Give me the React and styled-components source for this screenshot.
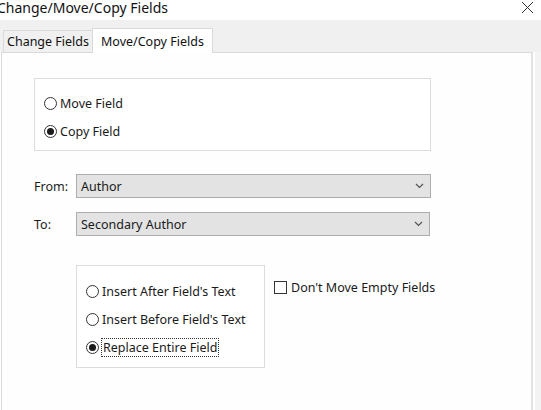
import React from 'react';
import styled, { createGlobalStyle } from 'styled-components';

const GlobalStyle = createGlobalStyle`
  html, body {
    margin: 0;
    padding: 0;
    background: #ffffff;
  }
  body {
    font-family: "Noto Sans", "Open Sans", sans-serif;
    color: #1a1a1a;
  }
`;

const Window = styled.div`
  width: 541px;
  height: 410px;
  overflow: hidden;
  display: flex;
  flex-direction: column;
  background: #ffffff;
`;

const TitleBar = styled.div`
  height: 20px;
  display: flex;
  align-items: center;
  justify-content: space-between;
  padding-right: 7px;
`;

const Title = styled.span`
  font-size: 14px;
  margin-left: -3px;
  margin-top: -6px;
  color: #111;
`;

const CloseIcon = styled.svg`
  width: 13px;
  height: 13px;
  margin-top: -6px;
`;

const TabStrip = styled.div`
  height: 32px;
  background: #f0f0f0;
  display: flex;
  align-items: flex-end;
  padding-left: 3px;
`;

const Tab = styled.div`
  box-sizing: border-box;
  height: ${(p) => (p.$active ? '25px' : '22px')};
  padding: 0 ${(p) => (p.$active ? '8px' : '3px')};
  display: flex;
  align-items: center;
  font-size: 12.5px;
  background: ${(p) => (p.$active ? '#ffffff' : '#f0f0f0')};
  border: 1px solid #dadada;
  border-bottom: none;
  border-right: ${(p) => (p.$active ? '1px solid #dadada' : 'none')};
  margin-bottom: ${(p) => (p.$active ? '-1px' : '0')};
  position: relative;
  z-index: ${(p) => (p.$active ? 1 : 0)};
  color: #111;
`;

const Body = styled.div`
  flex: 1;
  display: flex;
  padding-left: 1px;
`;

const Panel = styled.div`
  box-sizing: border-box;
  width: 532px;
  border: 1px solid #dadada;
  border-bottom: none;
  border-right: 2px solid #e2e2e2;
  background: #fefefe;
  padding: 25px 0 0 32px;
  display: flex;
  flex-direction: column;
`;

const GroupBox = styled.div`
  box-sizing: border-box;
  width: ${(p) => p.$w}px;
  height: ${(p) => p.$h}px;
  border: 1px solid #dcdcdc;
  background: #ffffff;
  padding: ${(p) => p.$pad};
  display: flex;
  flex-direction: column;
  gap: ${(p) => p.$gap}px;
`;

const OptionRow = styled.label`
  display: flex;
  align-items: center;
  height: 20px;
  font-size: 12.5px;
  gap: 3px;
`;

const Radio = styled.span`
  box-sizing: border-box;
  width: 13px;
  height: 13px;
  border-radius: 50%;
  border: 1px solid #333;
  background: #fff;
  display: flex;
  align-items: center;
  justify-content: center;
  flex-shrink: 0;
  &::after {
    content: '';
    width: 7px;
    height: 7px;
    border-radius: 50%;
    background: ${(p) => (p.$checked ? '#1a1a1a' : 'transparent')};
  }
`;

const Check = styled.span`
  box-sizing: border-box;
  width: 13px;
  height: 13px;
  border: 1px solid #333;
  background: #fff;
  flex-shrink: 0;
`;

const FocusText = styled.span`
  outline: 1px dotted #333;
  outline-offset: 0;
  padding: 0 1px;
  line-height: 17px;
`;

const FieldRow = styled.div`
  display: flex;
  align-items: center;
  margin-top: ${(p) => p.$mt}px;
`;

const FieldLabel = styled.span`
  width: 42px;
  font-size: 12.5px;
`;

const Select = styled.div`
  box-sizing: border-box;
  width: ${(p) => p.$w}px;
  height: 24px;
  background: #e3e3e3;
  border: 1px solid #adadad;
  display: flex;
  align-items: center;
  justify-content: space-between;
  padding: 0 6px 0 4px;
  font-size: 12.5px;
`;

const Chevron = styled.svg`
  width: 9px;
  height: 6px;
`;

const BottomRow = styled.div`
  display: flex;
  align-items: flex-start;
  margin-top: 29px;
  margin-left: 42px;
  gap: 9px;
`;

const CheckRow = styled(OptionRow)`
  margin-top: 12px;
  gap: 4px;
`;

const RightStrip = styled.div`
  width: 6px;
  margin-left: 2px;
  background: #f3f3f3;
`;

const SelectBox = ({ value, w }) => (
  <Select $w={w}>
    <span>{value}</span>
    <Chevron viewBox="0 0 9 6">
      <path d="M1 1 L4.5 4.5 L8 1" fill="none" stroke="#555" strokeWidth="1.2" />
    </Chevron>
  </Select>
);

export default function App() {
  return (
    <Window>
      <GlobalStyle />
      <TitleBar>
        <Title>Change/Move/Copy Fields</Title>
        <CloseIcon viewBox="0 0 13 13">
          <path d="M1 1 L12 12 M12 1 L1 12" stroke="#333" strokeWidth="1" />
        </CloseIcon>
      </TitleBar>
      <TabStrip>
        <Tab>Change Fields</Tab>
        <Tab $active>Move/Copy Fields</Tab>
      </TabStrip>
      <Body>
        <Panel>
          <GroupBox $w={397} $h={73} $pad="14px 0 0 9px" $gap={8}>
            <OptionRow>
              <Radio />
              Move Field
            </OptionRow>
            <OptionRow>
              <Radio $checked />
              Copy Field
            </OptionRow>
          </GroupBox>
          <FieldRow $mt={23}>
            <FieldLabel>From:</FieldLabel>
            <SelectBox value="Author" w={355} />
          </FieldRow>
          <FieldRow $mt={14}>
            <FieldLabel>To:</FieldLabel>
            <SelectBox value="Secondary Author" w={354} />
          </FieldRow>
          <BottomRow>
            <GroupBox $w={189} $h={103} $pad="15px 0 0 9px" $gap={8}>
              <OptionRow>
                <Radio />
                Insert After Field's Text
              </OptionRow>
              <OptionRow>
                <Radio />
                Insert Before Field's Text
              </OptionRow>
              <OptionRow>
                <Radio $checked />
                <FocusText>Replace Entire Field</FocusText>
              </OptionRow>
            </GroupBox>
            <CheckRow>
              <Check />
              Don't Move Empty Fields
            </CheckRow>
          </BottomRow>
        </Panel>
        <RightStrip />
      </Body>
    </Window>
  );
}
